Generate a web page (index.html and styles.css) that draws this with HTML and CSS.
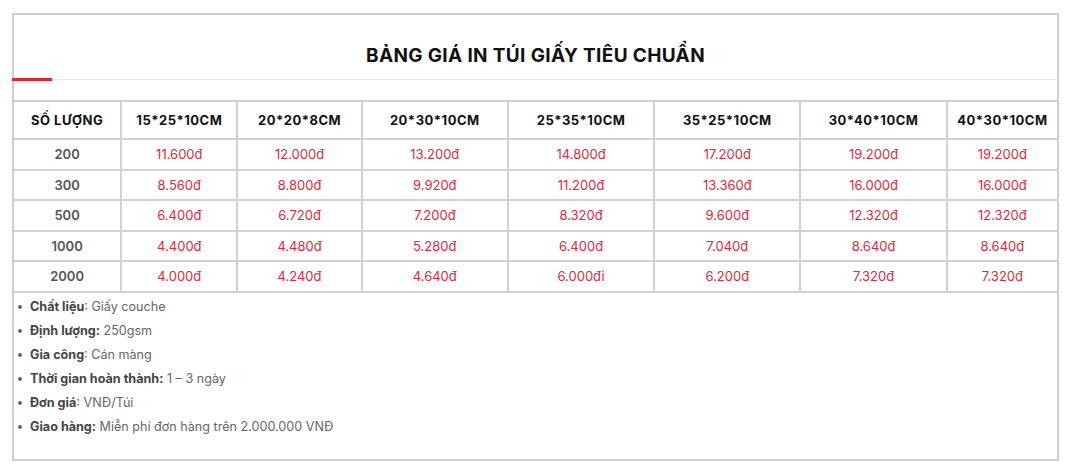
FILE: index.html
```html
<!DOCTYPE html>
<html lang="vi">
<head>
<meta charset="utf-8">
<title>Bảng giá in túi giấy tiêu chuẩn</title>
<link rel="stylesheet" href="styles.css">
</head>
<body>
<div class="box">
  <div class="head">
    <h2 class="title">BẢNG GIÁ IN TÚI GIẤY TIÊU CHUẨN</h2>
    <div class="sep"><span class="sep-accent"></span></div>
  </div>
  <table class="price">
    <colgroup>
      <col class="c-qty"><col class="c-1"><col class="c-2"><col class="c-w"><col class="c-w"><col class="c-w"><col class="c-w"><col class="c-last">
    </colgroup>
    <thead>
      <tr>
        <th>SỐ LƯỢNG</th><th>15*25*10CM</th><th>20*20*8CM</th><th>20*30*10CM</th><th>25*35*10CM</th><th>35*25*10CM</th><th>30*40*10CM</th><th>40*30*10CM</th>
      </tr>
    </thead>
    <tbody>
      <tr><td class="qty">200</td><td>11.600đ</td><td>12.000đ</td><td>13.200đ</td><td>14.800đ</td><td>17.200đ</td><td>19.200đ</td><td>19.200đ</td></tr>
      <tr><td class="qty">300</td><td>8.560đ</td><td>8.800đ</td><td>9.920đ</td><td>11.200đ</td><td>13.360đ</td><td>16.000đ</td><td>16.000đ</td></tr>
      <tr><td class="qty">500</td><td>6.400đ</td><td>6.720đ</td><td>7.200đ</td><td>8.320đ</td><td>9.600đ</td><td>12.320đ</td><td>12.320đ</td></tr>
      <tr><td class="qty">1000</td><td>4.400đ</td><td>4.480đ</td><td>5.280đ</td><td>6.400đ</td><td>7.040đ</td><td>8.640đ</td><td>8.640đ</td></tr>
      <tr><td class="qty">2000</td><td>4.000đ</td><td>4.240đ</td><td>4.640đ</td><td>6.000đi</td><td>6.200đ</td><td>7.320đ</td><td>7.320đ</td></tr>
    </tbody>
  </table>
  <ul class="specs">
    <li><strong>Chất liệu</strong>: Giấy couche</li>
    <li><strong>Định lượng:</strong> 250gsm</li>
    <li><strong>Gia công</strong>: Cán màng</li>
    <li><strong>Thời gian hoàn thành:</strong> 1 – 3 ngày</li>
    <li><strong>Đơn giá</strong>: VNĐ/Túi</li>
    <li><strong>Giao hàng:</strong> Miễn phí đơn hàng trên 2.000.000 VNĐ</li>
  </ul>
</div>
</body>
</html>
```
FILE: styles.css
```css
* { box-sizing: border-box; }

html, body {
  margin: 0;
  padding: 0;
  background: #ffffff;
}

body {
  font-family: Inter, "Noto Sans", "Liberation Sans", sans-serif;
  padding: 13px 0 0 12px;
}

.box {
  width: 1047px;
  height: 448px;
  border: 2px solid #cfcfcf;
  background: #fff;
}

.head {
  padding-top: 29px;
}

.title {
  margin: 0 0 11px 0;
  text-align: center;
  font-size: 19px;
  line-height: 24px;
  font-weight: 700;
  color: #111;
  letter-spacing: 0.35px;
}

.sep {
  height: 1px;
  background: #e8e8e8;
  position: relative;
}

.sep-accent {
  position: absolute;
  left: -2px;
  top: -1px;
  width: 40px;
  height: 3px;
  background: #e3242b;
}

.price {
  margin-top: 20px;
  width: 100%;
  border-collapse: collapse;
  table-layout: fixed;
}

.c-qty { width: 107px; }
.c-1 { width: 116px; }
.c-2 { width: 124px; }
.c-w { width: 146px; }
.c-last { width: 110px; }

.price th,
.price td {
  border: 2px solid #d2d2d2;
  text-align: center;
  padding: 0;
}

.price tr > :first-child { border-left: none; }
.price tr > :last-child { border-right: none; }

.price th {
  height: 38px;
  font-size: 13px;
  font-weight: 700;
  color: #111;
  letter-spacing: 0.5px;
}

.price td {
  height: 30.5px;
  font-size: 13px;
  color: #e2293a;
}

.price td.qty {
  color: #555;
  font-weight: 600;
}

.specs {
  list-style: none;
  margin: 0;
  padding: 2px 0 0 16px;
}

.specs li {
  position: relative;
  font-size: 12.6px;
  line-height: 24px;
  color: #666;
}

.specs li::before {
  content: "";
  position: absolute;
  left: -12px;
  top: 10px;
  width: 4px;
  height: 4px;
  border-radius: 50%;
  background: #666;
}

.specs strong {
  color: #444;
  font-weight: 700;
}
```
